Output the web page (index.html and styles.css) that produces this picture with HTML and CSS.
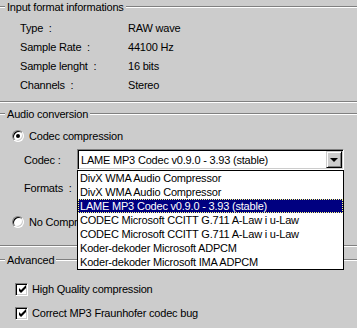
FILE: index.html
```html
<!DOCTYPE html>
<html lang="en">
<head>
    <meta charset="UTF-8">
    <meta name="viewport" content="width=device-width, initial-scale=1.0">
    <title>Audio conversion settings</title>
    <link rel="stylesheet" href="styles.css">
</head>
<body>
    <div class="panel">
        <div class="group info-group">
            <div class="group-head"><span class="legend">Input format informations</span></div>
            <div class="info-grid">
                <div class="info-label">Type  :</div><div>RAW wave</div>
                <div class="info-label">Sample Rate  :</div><div>44100 Hz</div>
                <div class="info-label">Sample lenght  :</div><div>16 bits</div>
                <div class="info-label">Channels  :</div><div>Stereo</div>
            </div>
        </div>

        <div class="group audio-group">
            <div class="group-head"><span class="legend">Audio conversion</span></div>
            <label class="option radio-row first-radio">
                <span class="radio checked"></span>Codec compression
            </label>
            <div class="field-row codec-row">
                <span class="field-label">Codec :</span>
                <div class="combo">
                    <span class="combo-text">LAME MP3 Codec v0.9.0 - 3.93 (stable)</span>
                    <span class="combo-button"><span class="arrow"></span></span>
                    <ul class="combo-list">
                        <li>DivX WMA Audio Compressor</li>
                        <li>DivX WMA Audio Compressor</li>
                        <li class="selected">LAME MP3 Codec v0.9.0 - 3.93 (stable)</li>
                        <li>CODEC Microsoft CCITT G.711 A-Law i u-Law</li>
                        <li>CODEC Microsoft CCITT G.711 A-Law i u-Law</li>
                        <li>Koder-dekoder Microsoft ADPCM</li>
                        <li>Koder-dekoder Microsoft IMA ADPCM</li>
                    </ul>
                </div>
            </div>
            <div class="field-row formats-row">
                <span class="field-label">Formats  :</span>
                <div class="combo">
                    <span class="combo-text"></span>
                    <span class="combo-button"><span class="arrow"></span></span>
                </div>
            </div>
            <label class="option radio-row last-radio">
                <span class="radio"></span><span class="clipped">No Compression</span>
            </label>
        </div>

        <div class="group advanced-group">
            <div class="group-head"><span class="legend">Advanced</span></div>
            <label class="option check-row first-check">
                <span class="checkbox">
                    <svg width="9" height="9" viewBox="0 0 9 9"><path d="M1 3v3l2 2l5-5v-3l-5 5z" fill="#000"/></svg>
                </span>High Quality compression
            </label>
            <label class="option check-row">
                <span class="checkbox">
                    <svg width="9" height="9" viewBox="0 0 9 9"><path d="M1 3v3l2 2l5-5v-3l-5 5z" fill="#000"/></svg>
                </span>Correct MP3 Fraunhofer codec bug
            </label>
        </div>
    </div>
</body>
</html>
```

FILE: styles.css
```css
:root {
    --face: #cccccc;
    --shadow: #808080;
    --light: #ffffff;
    --dark: #000000;
    --select: #000080;
}

body {
    margin: 0;
    background-color: var(--face);
    color: #000;
    font-family: 'Liberation Sans', Arial, sans-serif;
    font-size: 11px;
    letter-spacing: -0.2px;
    overflow: hidden;
}

.panel {
    width: 357px;
    height: 328px;
    overflow: hidden;
}

/* etched group boxes, side borders are outside the window */
.group {
    border-bottom: 1px solid var(--light);
    box-shadow: inset 0 -1px 0 var(--shadow);
}

.group-head {
    display: flex;
    align-items: center;
    height: 14px;
}

.group-head::before,
.group-head::after {
    content: '';
    height: 0;
    border-top: 1px solid var(--shadow);
    border-bottom: 1px solid var(--light);
}

.group-head::before {
    width: 5px;
}

.group-head::after {
    flex: 1;
}

.legend {
    padding: 0 2px;
    line-height: 14px;
}

.info-group {
    padding-bottom: 8px;
}

.info-grid {
    display: grid;
    grid-template-columns: 108px auto;
    grid-auto-rows: 19px;
    align-items: center;
    margin-top: 4px;
    padding-left: 20px;
}

.info-label {
    white-space: pre;
}

.audio-group {
    margin-top: 4px;
    padding-bottom: 16px;
}

.option {
    display: flex;
    align-items: center;
    height: 16px;
    white-space: nowrap;
}

.radio-row {
    padding-left: 12px;
    gap: 5px;
}

.first-radio {
    margin-top: 7px;
}

.last-radio {
    margin-top: 16px;
}

/* the open list lies over the rest of this label */
.clipped {
    width: 48px;
    overflow: hidden;
}

.radio {
    position: relative;
    box-sizing: border-box;
    width: 12px;
    height: 12px;
    border-radius: 50%;
    border: 1px solid;
    border-color: var(--shadow) var(--light) var(--light) var(--shadow);
    background: var(--light);
    box-shadow: inset 1px 1px 0 var(--dark), inset -1px -1px 0 var(--face);
}

.radio.checked::after {
    content: '';
    position: absolute;
    left: 3px;
    top: 3px;
    width: 4px;
    height: 4px;
    border-radius: 50%;
    background: var(--dark);
}

.field-row {
    display: flex;
    align-items: center;
    height: 21px;
    padding-left: 24px;
}

.codec-row {
    margin-top: 5px;
}

.formats-row {
    margin-top: 7px;
}

.field-label {
    width: 53px;
    white-space: pre;
}

.combo {
    position: relative;
    box-sizing: border-box;
    display: flex;
    align-items: center;
    width: 267px;
    height: 21px;
    border: 1px solid;
    border-color: var(--shadow) var(--light) var(--light) var(--shadow);
    background: var(--light);
    box-shadow: inset 1px 1px 0 var(--dark), inset -1px -1px 0 var(--face);
    padding: 2px 2px 2px 3px;
}

.combo-text {
    flex: 1;
    white-space: nowrap;
}

.combo-button {
    box-sizing: border-box;
    display: flex;
    justify-content: center;
    align-items: center;
    width: 16px;
    height: 17px;
    margin-right: -1px;
    background: var(--face);
    border: 1px solid;
    border-color: var(--face) var(--dark) var(--dark) var(--face);
    box-shadow: inset 1px 1px 0 var(--light), inset -1px -1px 0 var(--shadow);
}

.arrow {
    width: 0;
    height: 0;
    border-left: 4px solid transparent;
    border-right: 4px solid transparent;
    border-top: 4px solid var(--dark);
    margin-top: 1px;
}

/* open dropdown of the codec box */
.combo-list {
    position: absolute;
    top: 20px;
    left: -1px;
    z-index: 2;
    box-sizing: border-box;
    width: 267px;
    margin: 0;
    padding: 0;
    list-style: none;
    background: var(--light);
    border: 1px solid var(--dark);
}

.combo-list li {
    height: 14px;
    line-height: 14px;
    padding-left: 2px;
    white-space: nowrap;
}

.combo-list .selected {
    background: var(--select);
    color: #fff;
    outline: 1px dotted #ffff80;
    outline-offset: -1px;
}

.advanced-group {
    margin-top: 6px;
    padding-bottom: 20px;
}

.check-row {
    padding-left: 15px;
    gap: 4px;
    margin-top: 8px;
}

.first-check {
    margin-top: 14px;
}

.checkbox {
    box-sizing: border-box;
    display: flex;
    justify-content: center;
    align-items: center;
    width: 13px;
    height: 13px;
    border: 1px solid;
    border-color: var(--shadow) var(--light) var(--light) var(--shadow);
    background: var(--light);
    box-shadow: inset 1px 1px 0 var(--dark), inset -1px -1px 0 var(--face);
}

.checkbox svg {
    display: block;
    margin: 1px 0 0 1px;
}
```
